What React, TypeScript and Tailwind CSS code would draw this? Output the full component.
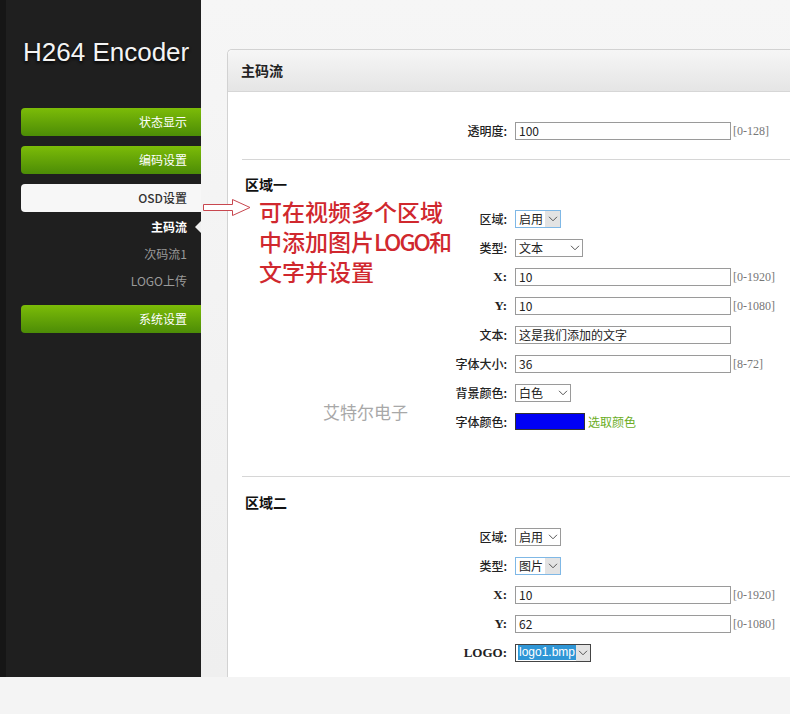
import React from "react";

const cjk = "font-['Noto_Sans_CJK_SC','Noto_Sans',sans-serif]";
const sans = "font-['Liberation_Sans','Noto_Sans_CJK_SC',sans-serif]";
const serif = "font-['Liberation_Serif','Noto_Sans_CJK_SC',serif]";

const Chevron = () => (
  <svg width="10" height="6" viewBox="0 0 10 6" fill="none">
    <path d="M1 0.8 L5 4.8 L9 0.8" stroke="#555" strokeWidth="1" />
  </svg>
);

type RowProps = {
  label: string;
  latin?: boolean;
  children: React.ReactNode;
};

const Row: React.FC<RowProps> = ({ label, latin, children }) => (
  <div className="flex h-[29px] items-center">
    <div
      className={`w-[279px] text-right text-[12px] text-[#222] ${
        latin ? `${serif} font-bold text-[13px]` : `${cjk} font-medium`
      }`}
    >
      {label}:
    </div>
    <div className="ml-[8px] flex items-center">{children}</div>
  </div>
);

const TextBox = ({ value, range }: { value: string; range?: string }) => (
  <>
    <div
      className={`flex h-[18px] w-[216px] items-center border border-[#9a9a9a] bg-white px-[3px] text-[12px] text-[#222] ${sans}`}
    >
      <span className={cjk}>{value}</span>
    </div>
    {range && (
      <span className={`ml-[2px] text-[12px] text-[#777] ${serif}`}>
        {range}
      </span>
    )}
  </>
);

type SelectProps = {
  value: string;
  width: string;
  focused?: boolean;
  highlight?: boolean;
};

const Select: React.FC<SelectProps> = ({ value, width, focused, highlight }) => (
  <div
    className={`flex h-[18px] items-stretch border bg-white text-[12px] text-[#222] ${width} ${
      focused
        ? "border-[#7fb8e6]"
        : highlight
        ? "border-[#444]"
        : "border-[#9a9a9a]"
    }`}
  >
    <div className="flex flex-1 items-center pl-[2px]">
      <span
        className={`leading-[15px] ${
          highlight ? `bg-[#2f96d6] px-[1px] text-white ${sans}` : `pl-[1px] ${cjk}`
        }`}
      >
        {value}
      </span>
    </div>
    <div
      className={`flex w-[15px] items-center justify-center ${
        focused || highlight ? "bg-[#e3e3e3]" : ""
      }`}
    >
      <Chevron />
    </div>
  </div>
);

const Divider = () => <div className="ml-[14px] h-px bg-[#d6d6d6]" />;

const SectionTitle = ({ children }: { children: React.ReactNode }) => (
  <div className={`pl-[17px] text-[14px] font-bold leading-[20px] text-[#111] ${cjk}`}>
    {children}
  </div>
);

const MenuButton = ({ label, active }: { label: string; active?: boolean }) => (
  <div
    className={`ml-[15px] flex h-[28px] items-center justify-end rounded-l-[4px] pr-[14px] text-[12px] ${cjk} ${
      active
        ? "bg-[#f7f7f7] font-medium text-[#333]"
        : "bg-gradient-to-b from-[#7cbc08] to-[#4c8c06] text-white"
    }`}
  >
    {label}
  </div>
);

const SubItem = ({ label, active }: { label: string; active?: boolean }) => (
  <div
    className={`relative flex h-[27px] items-center justify-end pr-[14px] text-[12px] ${cjk} ${
      active ? "font-bold text-white" : "text-[#9a9a9a]"
    }`}
  >
    {label}
    {active && (
      <span className="absolute right-0 top-1/2 h-0 w-0 -translate-y-1/2 border-y-[6px] border-r-[6px] border-y-transparent border-r-[#f0f0f0]" />
    )}
  </div>
);

export default function App() {
  return (
    <div className="relative h-[721px] w-[790px] overflow-hidden bg-white">
      <div className="flex h-[677px]">
        <aside className="w-[201px] border-l-[6px] border-[#161616] bg-[#1f1f1f]">
          <div
            className={`pl-[17px] pt-[36px] text-[26px] leading-[32px] text-[#f4f4f4] ${sans} [text-shadow:0_2px_3px_rgba(0,0,0,0.9)]`}
          >
            H264 Encoder
          </div>
          <div className="mt-[40px] flex flex-col">
            <MenuButton label="状态显示" />
            <div className="h-[10px]" />
            <MenuButton label="编码设置" />
            <div className="h-[10px]" />
            <MenuButton label="OSD设置" active />
            <div className="h-px" />
            <SubItem label="主码流" active />
            <SubItem label="次码流1" />
            <SubItem label="LOGO上传" />
            <div className="h-[11px]" />
            <MenuButton label="系统设置" />
          </div>
        </aside>

        <div className="flex-1 bg-gradient-to-b from-[#f6f6f6] to-[#efefef] pl-[26px] pt-[49px]">
          <div className="relative h-full rounded-tl-[5px] border-l border-t border-[#d2d2d2] bg-white">
            <div className="flex h-[42px] items-center rounded-tl-[5px] border-b border-[#d6d6d6] bg-gradient-to-b from-[#f6f6f6] to-[#e5e5e5] pl-[13px]">
              <span className={`text-[14px] font-bold text-[#222] ${cjk}`}>主码流</span>
            </div>

            <div className="pt-[24px]">
              <Row label="透明度">
                <TextBox value="100" range="[0-128]" />
              </Row>
            </div>
            <div className="mt-[14px]">
              <Divider />
            </div>

            <div className="mt-[14px]">
              <SectionTitle>区域一</SectionTitle>
            </div>
            <div className="mt-[10px]">
              <Row label="区域">
                <Select value="启用" width="w-[46px]" focused />
              </Row>
              <Row label="类型">
                <Select value="文本" width="w-[68px]" />
              </Row>
              <Row label="X" latin>
                <TextBox value="10" range="[0-1920]" />
              </Row>
              <Row label="Y" latin>
                <TextBox value="10" range="[0-1080]" />
              </Row>
              <Row label="文本">
                <TextBox value="这是我们添加的文字" />
              </Row>
              <Row label="字体大小">
                <TextBox value="36" range="[8-72]" />
              </Row>
              <Row label="背景颜色">
                <Select value="白色" width="w-[56px]" />
              </Row>
              <Row label="字体颜色">
                <div className="h-[17px] w-[70px] border border-[#333] bg-[#0000f5]" />
                <span className={`ml-[3px] text-[12px] text-[#6aad1e] ${cjk}`}>选取颜色</span>
              </Row>
            </div>

            <div className="mt-[40px]">
              <Divider />
            </div>
            <div className="mt-[15px]">
              <SectionTitle>区域二</SectionTitle>
            </div>
            <div className="mt-[10px]">
              <Row label="区域">
                <Select value="启用" width="w-[46px]" />
              </Row>
              <Row label="类型">
                <Select value="图片" width="w-[46px]" focused />
              </Row>
              <Row label="X" latin>
                <TextBox value="10" range="[0-1920]" />
              </Row>
              <Row label="Y" latin>
                <TextBox value="62" range="[0-1080]" />
              </Row>
              <Row label="LOGO" latin>
                <Select value="logo1.bmp" width="w-[76px]" highlight />
              </Row>
            </div>

            <div
              className={`absolute left-[95px] top-[349px] text-[17px] text-[#a8a8a8] ${cjk}`}
            >
              艾特尔电子
            </div>
          </div>
        </div>
      </div>
      <div className="h-[37px] bg-[#f4f4f4]" />

      {/* annotation overlay */}
      <svg
        className="absolute left-[202px] top-[198px]"
        width="50"
        height="20"
        viewBox="0 0 50 20"
        fill="none"
      >
        <path
          d="M1.5 6.5 H30.5 V1.5 L48 9.5 L30.5 17.5 V12.5 H1.5 Z"
          stroke="#c8474f"
          strokeWidth="1"
          fill="white"
        />
      </svg>
      <div
        className={`absolute left-[259px] top-[196px] whitespace-nowrap text-[23px] font-medium leading-[30px] text-[#d0282e] ${cjk}`}
      >
        可在视频多个区域
        <br />
        中添加图片<span className="tracking-[-2px]">LOGO</span>和
        <br />
        文字并设置
      </div>
    </div>
  );
}
